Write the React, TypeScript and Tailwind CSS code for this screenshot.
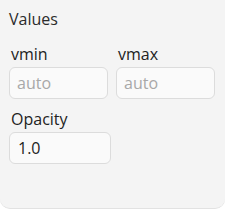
import React from "react";

export default function App() {
  const font = { fontFamily: "'Open Sans', 'Noto Sans', sans-serif" };
  return (
    <div className="w-[225px] h-[210px] bg-white" style={font}>
      <div className="w-[225px] h-[209px] bg-[#f4f4f4] rounded-b-[10px] border-b border-[#e2e2e2] px-[9px] pt-[9px] flex flex-col">
        <div className="text-[16px] leading-[20px] text-[#2b2b2b]">Values</div>
        <div className="flex gap-[8px] mt-[15px]">
          <div className="flex flex-col w-[99px]">
            <label className="text-[16px] leading-[20px] text-[#222] pl-[2px]">vmin</label>
            <input
              className="mt-[3px] h-[32px] w-[99px] rounded-[6px] border border-[#dcdcdc] bg-[#fafafa] px-[7px] text-[16px] text-[#222] placeholder:text-[#a8a8a8] outline-none"
              placeholder="auto"
              style={font}
            />
          </div>
          <div className="flex flex-col w-[99px]">
            <label className="text-[16px] leading-[20px] text-[#222] pl-[2px]">vmax</label>
            <input
              className="mt-[3px] h-[32px] w-[99px] rounded-[6px] border border-[#dcdcdc] bg-[#fafafa] px-[7px] text-[16px] text-[#222] placeholder:text-[#a8a8a8] outline-none"
              placeholder="auto"
              style={font}
            />
          </div>
        </div>
        <div className="flex flex-col mt-[10px]">
          <label className="text-[16px] leading-[20px] text-[#222] pl-[2px]">Opacity</label>
          <input
            className="mt-[3px] h-[32px] w-[102px] rounded-[6px] border border-[#dcdcdc] bg-[#fafafa] px-[8px] text-[16px] text-[#222] outline-none"
            defaultValue="1.0"
            style={font}
          />
        </div>
      </div>
    </div>
  );
}
